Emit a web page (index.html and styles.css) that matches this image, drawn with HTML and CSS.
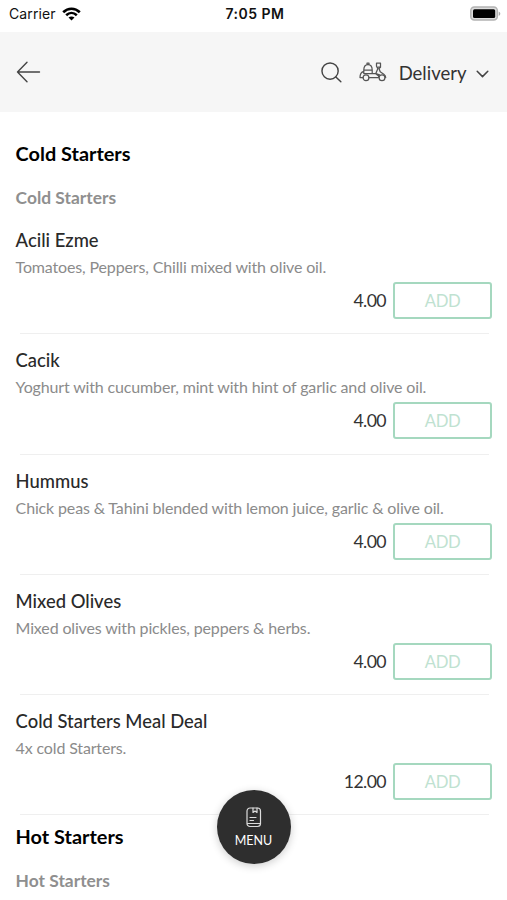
FILE: index.html
```html
<!DOCTYPE html>
<html lang="en">
<head>
<meta charset="utf-8">
<title>Menu</title>
<link rel="stylesheet" href="styles.css">
</head>
<body>
<div class="status">
  <div class="carrier"><span>Carrier</span>
    <svg width="19" height="14" viewBox="0 0 19 14" fill="none" stroke="#000" stroke-width="2.6"><path d="M1.2 5.2C6 .5 13 .5 17.8 5.2M4.2 8.2c3.2-3 7.400-3 10.600 0"/><path d="M6.500 10.600c1.800-1.500 4.200-1.500 6 0l-3 3z" fill="#000" stroke="none"/></svg>
  </div>
  <div class="time">7:05 PM</div>
  <svg class="battery" width="31" height="16" viewBox="0 0 31 16"><rect x=".8" y="1" width="26.500" height="13" rx="3.500" fill="#ddd" stroke="#b3b3b3" stroke-width="1.500"/><rect x="3" y="3.200" width="22.200" height="8.800" rx="1.500"/><path d="M28.700 5.500c2.200 1 2.200 3.500 0 4.500z" fill="#aaa"/></svg>
</div>
<header class="bar">
  <svg class="back" width="26" height="22" viewBox="0 0 26 22" fill="none" stroke="#444" stroke-width="1.400" stroke-linecap="round" stroke-linejoin="round"><path d="M23.500 11H1.500M11 1.200 1.500 11l9.500 9.800"/></svg>
  <svg class="search" width="21" height="21" viewBox="0 0 22 22" fill="none" stroke="#444" stroke-width="1.500" stroke-linecap="round"><circle cx="9.500" cy="9.500" r="8.500"/><path d="m15.600 15.600 5.200 5.200"/></svg>
  <svg class="scooter" width="28" height="20" viewBox="0 0 28 20" fill="none" stroke="#555" stroke-width="1.250" stroke-linecap="round" stroke-linejoin="round"><path d="M4.800 8c0-3.700 1.700-5.500 4.200-5.500s4.200 1.800 4.200 5.500zM8 2.500V1.200h2v1.300M4.800 8v3.600h8.400V8M4.800 9.300C2.300 10 1 12.300 1 15.500h3M10 15.700h9.200l.8-1.500-3.600-2.600h-3.200M17.500 1.200h4v4l-1.500 1.300 1.200 3.300 3.600 2.500c1.300.9 1.900 2 1.900 3.300M17.500 1.200v3l1.300 2.500-2 4.900M19 5.200h2.500M17 11.600l3.500 1.200"/><circle cx="7" cy="15.700" r="2.900"/><circle cx="23" cy="15.700" r="2.900"/></svg>
  <span class="mode">Delivery</span>
  <svg class="chevron" width="13" height="8" viewBox="0 0 13 8" fill="none" stroke="#444" stroke-width="1.500" stroke-linecap="round" stroke-linejoin="round"><path d="m1.200 1.200 5.300 5.400 5.300-5.400"/></svg>
</header>
<main class="list">
  <h2 class="title">Cold Starters</h2>
  <h3 class="subtitle">Cold Starters</h3>
  <article class="item"><div class="name">Acili Ezme</div><p class="desc">Tomatoes, Peppers, Chilli mixed with olive oil.</p><div class="buy"><span>4.00</span><button class="add">ADD</button></div></article>
  <article class="item"><div class="name">Cacik</div><p class="desc">Yoghurt with cucumber, mint with hint of garlic and olive oil.</p><div class="buy"><span>4.00</span><button class="add">ADD</button></div></article>
  <article class="item"><div class="name">Hummus</div><p class="desc">Chick peas &amp; Tahini blended with lemon juice, garlic &amp; olive oil.</p><div class="buy"><span>4.00</span><button class="add">ADD</button></div></article>
  <article class="item"><div class="name">Mixed Olives</div><p class="desc">Mixed olives with pickles, peppers &amp; herbs.</p><div class="buy"><span>4.00</span><button class="add">ADD</button></div></article>
  <article class="item"><div class="name">Cold Starters Meal Deal</div><p class="desc">4x cold Starters.</p><div class="buy"><span>12.00</span><button class="add">ADD</button></div></article>
  <h2 class="title next">Hot Starters</h2>
  <h3 class="subtitle">Hot Starters</h3>
</main>
<button class="menu">
  <svg width="16" height="21" viewBox="0 0 16 21" fill="none" stroke="#ddd" stroke-width="1.200" stroke-linecap="round" stroke-linejoin="round"><rect x="1" y="1" width="13.500" height="18.500" rx="3"/><path d="M7 1v4.500l2-1.500 2 1.500V1M4 10.500h6M4 13.500h3.500M1.500 16.500h13"/></svg>
  <span>MENU</span>
</button>
</body>
</html>
```
FILE: styles.css
```css
* { box-sizing: border-box; }
body { margin: 0; height: 900px; overflow: hidden; background: #fff; font-family: Lato, sans-serif; color: #333; }
h2, h3, p { margin: 0; }
button { font-family: inherit; }
.status { height: 32px; display: grid; grid-template-columns: 1fr auto 1fr; align-items: center; padding: 0 6px 5px 9px; font-family: Inter, sans-serif; color: #111; }
.carrier { display: flex; align-items: center; gap: 6px; font-size: 14px; letter-spacing: .1px; }
.time { font-size: 14px; font-weight: 600; letter-spacing: .5px; }
.battery { justify-self: end; }
.bar { height: 80px; background: #f6f6f6; display: flex; align-items: center; padding: 0 18.500px 0 16px; }
.search { margin-left: auto; }
.scooter { margin-left: 17px; }
.mode { margin: 2px 9px 0 11.500px; font-size: 18.500px; line-height: 24px; }
.chevron { margin-top: 3px; }
.list { padding: 29px 15px 0 15.600px; }
.title { font-size: 19.900px; line-height: 24px; font-weight: 700; color: #000; }
.subtitle { margin-top: 21px; font-size: 17.400px; line-height: 24px; font-weight: 700; color: #8f8f8f; }
.item { height: 120.250px; padding-top: 14px; background: linear-gradient(#efefef, #efefef) 4px 100% / calc(100% - 7px) 1px no-repeat; }
.subtitle + .item { margin-top: 4px; }
.name { font-size: 18.400px; line-height: 24px; font-weight: 500; color: #2a2a2a; }
.desc { margin-top: 5px; font-size: 16px; letter-spacing: -.15px; line-height: 20px; color: #8b8b8b; white-space: nowrap; }
.buy { margin-top: 5px; display: flex; justify-content: flex-end; align-items: center; gap: 7px; font-size: 17.700px; letter-spacing: -.6px; }
.add { width: 99px; height: 37px; padding: 1px 0 0; background: #fff; border: 2px solid #a5d8bf; border-radius: 3px; font-size: 16.700px; letter-spacing: -.4px; color: #bfe2d1; }
.title.next { margin-top: 8.800px; }
.title.next + .subtitle { margin-top: 21px; }
.menu { position: absolute; left: 217px; top: 790px; width: 74px; height: 74px; padding: 0; border: 0; border-radius: 50%; background: #2e2e2e; color: #fff; font-size: 12.500px; display: flex; flex-direction: column; align-items: center; justify-content: center; gap: 5px; box-shadow: 0 2px 8px rgba(0,0,0,.2); }
.menu span { margin-right: 1px; }
.menu svg { margin-top: 1px; }
```
